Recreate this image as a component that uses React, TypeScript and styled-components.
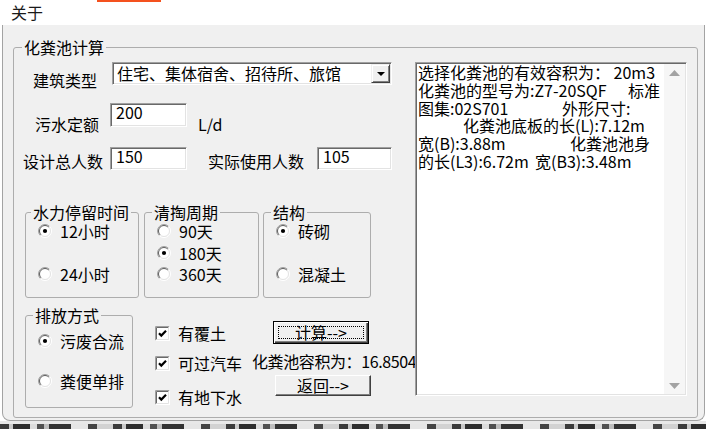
import React from "react";
import styled, { createGlobalStyle, css } from "styled-components";

const GlobalStyle = createGlobalStyle`
  * { box-sizing: border-box; }
  html, body { margin: 0; padding: 0; background: #ffffff; }
  body {
    font-family: "Noto Sans CJK SC", "Liberation Sans", sans-serif;
    font-size: 16px;
    color: #000;
  }
  #root { width: 706px; height: 429px; overflow: hidden; }
`;

const Screen = styled.div`
  width: 706px;
  height: 429px;
  display: flex;
  flex-direction: column;
  background: #ffffff;
  overflow: hidden;
`;

const TitleArea = styled.header`
  flex: none;
  height: 25px;
  background: #ffffff;
`;

const Accent = styled.div`
  width: 64px;
  height: 2px;
  margin-left: 97px;
  background: #f4511e;
`;

const MenuTitle = styled.div`
  padding-left: 11px;
  line-height: 20px;
  color: #1a1a1a;
`;

const Frame = styled.main`
  flex: none;
  height: 396px;
  margin: 0 1px 0 2px;
  background: #f0f0f0;
  border: 1px solid #a3a3a3;
  border-top: 0;
  border-radius: 0 0 8px 8px;
  padding: 12px 0 0 10px;
`;

const Backdrop = styled.div`
  flex: 1;
  background:
    linear-gradient(to bottom, #e8e8e8 0 3px, transparent 3px),
    repeating-linear-gradient(90deg, #3b3b3b 0 9px, #c9c9c9 9px 13px, #2e2e2e 13px 30px, #dcdcdc 30px 37px, #505050 37px 44px, #bdbdbd 44px 49px, #333 49px 71px, #e6e6e6 71px 88px, #444 88px 97px, #d2d2d2 97px 113px);
`;

const GroupBox = styled.fieldset<{ $w: number; $h: number; $ml?: number }>`
  flex: none;
  width: ${(p) => p.$w}px;
  height: ${(p) => p.$h}px;
  margin: 0 0 0 ${(p) => p.$ml ?? 0}px;
  padding: 0;
  min-width: 0;
  border: 1px solid #adadad;
  border-radius: 3px;
`;

const Legend = styled.legend<{ $ml: number }>`
  margin-left: ${(p) => p.$ml}px;
  padding: 0 2px;
  line-height: 20px;
  white-space: nowrap;
`;

const MainContent = styled.div`
  display: flex;
  align-items: flex-start;
  padding-top: 5px;
`;

const LeftPane = styled.div`
  flex: none;
  width: 401px;
  display: flex;
  flex-direction: column;
`;

const Row = styled.div<{ $mt: number; $h: number }>`
  flex: none;
  display: flex;
  align-items: flex-start;
  margin-top: ${(p) => p.$mt}px;
  height: ${(p) => p.$h}px;
`;

const Label = styled.span<{ $ml: number; $dy: number }>`
  flex: none;
  margin-left: ${(p) => p.$ml}px;
  margin-top: ${(p) => p.$dy}px;
  line-height: 20px;
  white-space: nowrap;
`;

const sunken = css`
  background: #ffffff;
  border: 1px solid;
  border-color: #a0a0a0 #ffffff #ffffff #a0a0a0;
  box-shadow: inset 1px 1px 0 #696969, inset -1px -1px 0 #e3e3e3;
`;

const Combo = styled.div<{ $ml: number; $w: number }>`
  ${sunken};
  flex: none;
  margin-left: ${(p) => p.$ml}px;
  width: ${(p) => p.$w}px;
  height: 23px;
  display: flex;
  align-items: center;
  padding: 1px 1px 1px 4px;
`;

const ComboText = styled.span`
  flex: 1;
  line-height: 19px;
  white-space: nowrap;
`;

const DropButton = styled.div`
  flex: none;
  width: 19px;
  height: 19px;
  background: #f0f0f0;
  border: 1px solid;
  border-color: #f0f0f0 #404040 #404040 #f0f0f0;
  box-shadow: inset 1px 1px 0 #ffffff, inset -1px -1px 0 #808080;
  display: flex;
  align-items: center;
  justify-content: center;
`;

const Field = styled.div<{ $ml: number; $w: number; $h: number }>`
  ${sunken};
  flex: none;
  margin-left: ${(p) => p.$ml}px;
  width: ${(p) => p.$w}px;
  height: ${(p) => p.$h}px;
  padding: 2px 0 0 5px;
  line-height: 12px;
`;

const OptionList = styled.div<{ $pt: number; $h: number }>`
  display: flex;
  flex-direction: column;
  justify-content: space-between;
  margin-top: ${(p) => p.$pt}px;
  height: ${(p) => p.$h}px;
`;

const RadioItem = styled.div`
  display: flex;
  align-items: center;
  height: 20px;
  padding-left: 12px;
`;

const OptionText = styled.span`
  margin-left: 8px;
  line-height: 20px;
  white-space: nowrap;
`;

const CheckColumn = styled.div<{ $ml: number }>`
  flex: none;
  display: flex;
  flex-direction: column;
  margin-left: ${(p) => p.$ml}px;
`;

const CheckItem = styled.div<{ $mt: number }>`
  display: flex;
  align-items: center;
  height: 20px;
  margin-top: ${(p) => p.$mt}px;
`;

const ActionColumn = styled.div<{ $ml: number }>`
  flex: none;
  display: flex;
  flex-direction: column;
  align-items: flex-start;
  margin-left: ${(p) => p.$ml}px;
`;

const PushButton = styled.div<{ $ml: number; $mt: number; $w: number; $h: number; $default?: boolean }>`
  flex: none;
  margin: ${(p) => p.$mt}px 0 0 ${(p) => p.$ml}px;
  width: ${(p) => p.$w}px;
  height: ${(p) => p.$h}px;
  background: #f0f0f0;
  display: flex;
  align-items: center;
  justify-content: center;
  line-height: 15px;
  white-space: nowrap;
  ${(p) =>
    p.$default
      ? css`
          border: 1px solid #000000;
          box-shadow: inset 1px 1px 0 #ffffff, inset -1px -1px 0 #404040, inset -2px -2px 0 #808080;
          padding: 4px;
        `
      : css`
          border: 1px solid;
          border-color: #ffffff #404040 #404040 #ffffff;
          box-shadow: inset -1px -1px 0 #808080;
        `}
`;

const FocusRect = styled.span`
  flex: 1;
  align-self: stretch;
  border: 1px dotted #000000;
  display: flex;
  align-items: center;
  justify-content: center;
`;

const ResultText = styled.div<{ $mt: number }>`
  margin-top: ${(p) => p.$mt}px;
  line-height: 20px;
  white-space: nowrap;
  letter-spacing: -0.4px;
`;

const TextBox = styled.div`
  ${sunken};
  flex: none;
  width: 272px;
  height: 334px;
  display: flex;
  padding: 1px;
`;

const TextContent = styled.div`
  flex: 1;
  padding-left: 1px;
  line-height: 17.8px;
  display: flex;
  flex-direction: column;
`;

const TextLine = styled.div<{ $indent?: number }>`
  display: flex;
  white-space: pre;
  padding-left: ${(p) => p.$indent ?? 0}px;
`;

const Seg = styled.span<{ $w?: number }>`
  flex: none;
  ${(p) => (p.$w ? `width: ${p.$w}px;` : "")}
`;

const ScrollBar = styled.div`
  flex: none;
  width: 21px;
  background: #f6f6f6;
  display: flex;
  flex-direction: column;
  justify-content: space-between;
`;

const ScrollArrow = styled.div`
  height: 17px;
  display: flex;
  align-items: center;
  justify-content: center;
`;

const RadioIcon = ({ checked }: { checked?: boolean }) => (
  <svg width="14" height="14" viewBox="0 0 14 14" style={{ flex: "none" }}>
    <circle cx="7" cy="7" r="6" fill="#ffffff" />
    <path d="M2.4 11.6 A6.5 6.5 0 0 1 11.6 2.4" stroke="#a0a0a0" strokeWidth="1" fill="none" />
    <path d="M3.1 10.9 A5.5 5.5 0 0 1 10.9 3.1" stroke="#5e5e5e" strokeWidth="1" fill="none" />
    <path d="M2.4 11.6 A6.5 6.5 0 0 0 11.6 2.4" stroke="#ffffff" strokeWidth="1" fill="none" />
    <path d="M3.1 10.9 A5.5 5.5 0 0 0 10.9 3.1" stroke="#e3e3e3" strokeWidth="1" fill="none" />
    {checked && <circle cx="7" cy="7" r="2.1" fill="#000000" />}
  </svg>
);

const CheckIcon = () => (
  <svg width="15" height="15" viewBox="0 0 15 15" style={{ flex: "none" }}>
    <rect x="0" y="0" width="15" height="15" fill="#ffffff" />
    <path d="M0.5 14.5 V0.5 H14.5" stroke="#a0a0a0" fill="none" />
    <path d="M1.5 13.5 V1.5 H13.5" stroke="#6a6a6a" fill="none" />
    <path d="M0.5 14.5 H14.5 V0.5" stroke="#ffffff" fill="none" />
    <path d="M1.5 13.5 H13.5 V1.5" stroke="#e3e3e3" fill="none" />
    <path d="M4 7.2 L6.3 9.6 L11 4.8" stroke="#000000" strokeWidth="2.2" fill="none" />
  </svg>
);

const DropArrow = () => (
  <svg width="8" height="4" viewBox="0 0 8 4">
    <path d="M0 0 H8 L4 4 Z" fill="#000000" />
  </svg>
);

const ScrollTriangle = ({ down }: { down?: boolean }) => (
  <svg width="11" height="6" viewBox="0 0 11 6">
    <path d={down ? "M0 0 H11 L5.5 6 Z" : "M5.5 0 L11 6 H0 Z"} fill="#a3a3a3" />
  </svg>
);

export default function App() {
  return (
    <>
      <GlobalStyle />
      <Screen>
        <TitleArea>
          <Accent />
          <MenuTitle>关于</MenuTitle>
        </TitleArea>
        <Frame>
          <GroupBox $w={685} $h={381}>
            <Legend $ml={8}>化粪池计算</Legend>
            <MainContent>
              <LeftPane>
                <Row $mt={0} $h={23}>
                  <Label $ml={19} $dy={8}>建筑类型</Label>
                  <Combo $ml={15} $w={280}>
                    <ComboText>住宅、集体宿舍、招待所、旅馆</ComboText>
                    <DropButton>
                      <DropArrow />
                    </DropButton>
                  </Combo>
                </Row>
                <Row $mt={18} $h={24}>
                  <Label $ml={21} $dy={11}>污水定额</Label>
                  <Field $ml={11} $w={77} $h={24}>200</Field>
                  <Label $ml={11} $dy={11}>L/d</Label>
                </Row>
                <Row $mt={20} $h={23}>
                  <Label $ml={9} $dy={4}>设计总人数</Label>
                  <Field $ml={7} $w={77} $h={23}>150</Field>
                  <Label $ml={21} $dy={4}>实际使用人数</Label>
                  <Field $ml={13} $w={75} $h={23}>105</Field>
                </Row>
                <Row $mt={32} $h={96}>
                  <GroupBox $ml={11} $w={114} $h={96}>
                    <Legend $ml={5}>水力停留时间</Legend>
                    <OptionList $pt={-1} $h={63}>
                      <RadioItem>
                        <RadioIcon checked />
                        <OptionText>12小时</OptionText>
                      </RadioItem>
                      <RadioItem>
                        <RadioIcon />
                        <OptionText>24小时</OptionText>
                      </RadioItem>
                    </OptionList>
                  </GroupBox>
                  <GroupBox $ml={5} $w={115} $h={96}>
                    <Legend $ml={7}>清掏周期</Legend>
                    <OptionList $pt={-1} $h={63}>
                      <RadioItem>
                        <RadioIcon />
                        <OptionText>90天</OptionText>
                      </RadioItem>
                      <RadioItem>
                        <RadioIcon checked />
                        <OptionText>180天</OptionText>
                      </RadioItem>
                      <RadioItem>
                        <RadioIcon />
                        <OptionText>360天</OptionText>
                      </RadioItem>
                    </OptionList>
                  </GroupBox>
                  <GroupBox $ml={4} $w={108} $h={96}>
                    <Legend $ml={7}>结构</Legend>
                    <OptionList $pt={-1} $h={63}>
                      <RadioItem>
                        <RadioIcon checked />
                        <OptionText>砖砌</OptionText>
                      </RadioItem>
                      <RadioItem>
                        <RadioIcon />
                        <OptionText>混凝土</OptionText>
                      </RadioItem>
                    </OptionList>
                  </GroupBox>
                </Row>
                <Row $mt={7} $h={103}>
                  <GroupBox $ml={11} $w={108} $h={103}>
                    <Legend $ml={7}>排放方式</Legend>
                    <OptionList $pt={6} $h={60}>
                      <RadioItem>
                        <RadioIcon checked />
                        <OptionText>污废合流</OptionText>
                      </RadioItem>
                      <RadioItem>
                        <RadioIcon />
                        <OptionText>粪便单排</OptionText>
                      </RadioItem>
                    </OptionList>
                  </GroupBox>
                  <CheckColumn $ml={22}>
                    <CheckItem $mt={18}>
                      <CheckIcon />
                      <OptionText>有覆土</OptionText>
                    </CheckItem>
                    <CheckItem $mt={10}>
                      <CheckIcon />
                      <OptionText>可过汽车</OptionText>
                    </CheckItem>
                    <CheckItem $mt={14}>
                      <CheckIcon />
                      <OptionText>有地下水</OptionText>
                    </CheckItem>
                  </CheckColumn>
                  <ActionColumn $ml={10}>
                    <PushButton $ml={21} $mt={16} $w={96} $h={23} $default>
                      <FocusRect>计算--&gt;</FocusRect>
                    </PushButton>
                    <ResultText $mt={7}>化粪池容积为：16.8504</ResultText>
                    <PushButton $ml={23} $mt={4} $w={96} $h={21}>
                      返回--&gt;
                    </PushButton>
                  </ActionColumn>
                </Row>
              </LeftPane>
              <TextBox>
                <TextContent>
                  <TextLine>
                    <Seg>选择化粪池的有效容积为： 20m3</Seg>
                  </TextLine>
                  <TextLine>
                    <Seg $w={210}>化粪池的型号为:Z7-20SQF</Seg>
                    <Seg>标准</Seg>
                  </TextLine>
                  <TextLine>
                    <Seg $w={144}>图集:02S701</Seg>
                    <Seg>外形尺寸:</Seg>
                  </TextLine>
                  <TextLine $indent={45}>
                    <Seg>化粪池底板的长(L):7.12m</Seg>
                  </TextLine>
                  <TextLine>
                    <Seg $w={152}>宽(B):3.88m</Seg>
                    <Seg>化粪池池身</Seg>
                  </TextLine>
                  <TextLine>
                    <Seg $w={117}>的长(L3):6.72m</Seg>
                    <Seg>宽(B3):3.48m</Seg>
                  </TextLine>
                </TextContent>
                <ScrollBar>
                  <ScrollArrow>
                    <ScrollTriangle />
                  </ScrollArrow>
                  <ScrollArrow>
                    <ScrollTriangle down />
                  </ScrollArrow>
                </ScrollBar>
              </TextBox>
            </MainContent>
          </GroupBox>
        </Frame>
        <Backdrop />
      </Screen>
    </>
  );
}
